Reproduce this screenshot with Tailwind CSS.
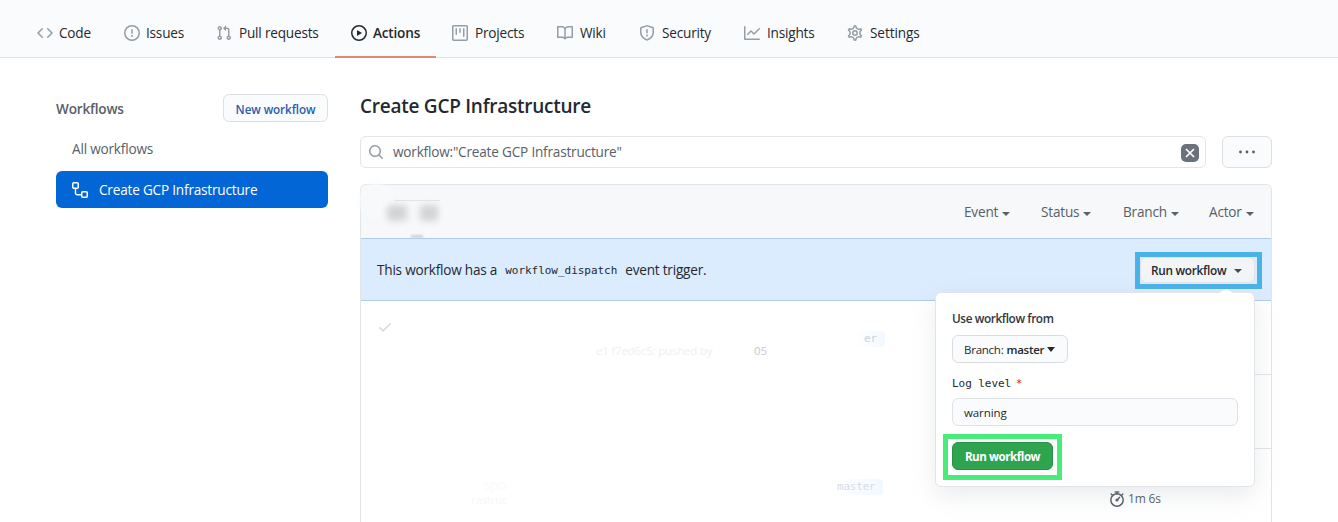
<!DOCTYPE html>
<html lang="en">
<head>
<meta charset="utf-8">
<title>Actions</title>
<script src="https://cdn.jsdelivr.net/npm/@tailwindcss/browser@4"></script>
</head>
<body class="w-[1338px] h-[522px] overflow-hidden bg-white font-['Open_Sans','Noto_Sans',sans-serif] text-[13.6px] tracking-[-0.2px] leading-5 text-[#24292e] whitespace-nowrap">
<nav class="flex h-[58px] bg-[#fafbfc] border-b border-[#dfe2e8] pl-[21px] pt-[9px]">
  <a class="flex w-[87px] items-center gap-[6px] pl-4"><svg class="size-4 fill-[#959da5]" viewBox="0 0 16 16"><path fill-rule="evenodd" d="M4.72 3.22a.75.75 0 011.06 1.06L2.06 8l3.72 3.72a.75.75 0 11-1.06 1.06L.47 8.53a.75.75 0 010-1.06l4.25-4.25zm6.56 0a.75.75 0 10-1.06 1.06L13.94 8l-3.72 3.72a.75.75 0 101.06 1.06l4.25-4.25a.75.75 0 000-1.06l-4.25-4.25z"/></svg><span>Code</span></a>
  <a class="flex w-[92px] items-center gap-[6px] pl-4"><svg class="size-4 fill-[#959da5]" viewBox="0 0 16 16"><path fill-rule="evenodd" d="M8 1.5a6.5 6.5 0 100 13 6.5 6.5 0 000-13zM0 8a8 8 0 1116 0A8 8 0 010 8zm9 3a1 1 0 11-2 0 1 1 0 012 0zm-.25-6.25a.75.75 0 00-1.5 0v3.5a.75.75 0 001.5 0v-3.5z"/></svg><span>Issues</span></a>
  <a class="flex w-[135px] items-center gap-[7px] pl-4"><svg class="size-4 fill-[#959da5]" viewBox="0 0 16 16"><path fill-rule="evenodd" d="M7.177 3.073L9.573.677A.25.25 0 0110 .854v4.792a.25.25 0 01-.427.177L7.177 3.427a.25.25 0 010-.354zM3.75 2.5a.75.75 0 100 1.5.75.75 0 000-1.5zm-2.25.75a2.25 2.25 0 113 2.122v5.256a2.251 2.251 0 11-1.5 0V5.372A2.25 2.25 0 011.5 3.25zM11 2.5h-1V4h1a1 1 0 011 1v5.628a2.251 2.251 0 101.5 0V5A2.5 2.5 0 0011 2.5zm1 10.25a.75.75 0 111.5 0 .75.75 0 01-1.5 0zM3.75 12a.75.75 0 100 1.5.75.75 0 000-1.5z"/></svg><span>Pull requests</span></a>
  <a class="flex w-[101px] items-center gap-[6px] pl-4 border-b-2 border-[#e5857a] -mb-px pt-px font-semibold"><svg class="size-4 fill-[#24292e]" viewBox="0 0 16 16"><path fill-rule="evenodd" d="M1.5 8a6.5 6.5 0 1113 0 6.5 6.5 0 01-13 0zM8 0a8 8 0 100 16A8 8 0 008 0zM6.379 5.227A.25.25 0 006 5.442v5.117a.25.25 0 00.379.214l4.264-2.559a.25.25 0 000-.428L6.379 5.227z"/></svg><span>Actions</span></a>
  <a class="flex w-[105px] items-center gap-[7px] pl-4"><svg class="size-4 fill-[#959da5]" viewBox="0 0 16 16"><path fill-rule="evenodd" d="M1.75 0A1.75 1.75 0 000 1.75v12.5C0 15.216.784 16 1.75 16h12.5A1.75 1.75 0 0016 14.25V1.75A1.75 1.75 0 0014.25 0H1.75zM1.5 1.75a.25.25 0 01.25-.25h12.5a.25.25 0 01.25.25v12.5a.25.25 0 01-.25.25H1.75a.25.25 0 01-.25-.25V1.75zM11.75 3a.75.75 0 00-.75.75v7.5a.75.75 0 001.5 0v-7.5a.75.75 0 00-.75-.75zm-8.25.75a.75.75 0 011.5 0v5.5a.75.75 0 01-1.5 0v-5.5zM8 3a.75.75 0 00-.75.75v3.5a.75.75 0 001.5 0v-3.5A.75.75 0 008 3z"/></svg><span>Projects</span></a>
  <a class="flex w-[82px] items-center gap-[7px] pl-4"><svg class="size-4 fill-[#959da5]" viewBox="0 0 16 16"><path fill-rule="evenodd" d="M0 1.75A.75.75 0 01.75 1h4.253c1.227 0 2.317.59 3 1.501A3.744 3.744 0 0111.006 1h4.245a.75.75 0 01.75.75v10.5a.75.75 0 01-.75.75h-4.507a2.25 2.25 0 00-1.591.659l-.622.621a.75.75 0 01-1.06 0l-.622-.621A2.25 2.25 0 005.258 13H.75a.75.75 0 01-.75-.75V1.75zm8.755 3a2.25 2.25 0 012.25-2.25H14.5v9h-3.757c-.71 0-1.4.201-1.992.572l.004-7.322zm-1.504 7.324l.004-5.073-.002-2.253A2.25 2.25 0 005.003 2.5H1.5v9h3.757a3.75 3.75 0 011.994.574z"/></svg><span>Wiki</span></a>
  <a class="flex w-[105px] items-center gap-[7px] pl-4"><svg class="size-4 fill-[#959da5]" viewBox="0 0 16 16"><path fill-rule="evenodd" d="M7.467.133a1.75 1.75 0 011.066 0l5.25 1.68A1.75 1.75 0 0115 3.48V7c0 1.566-.32 3.182-1.303 4.682-.983 1.498-2.585 2.813-5.032 3.855a1.7 1.7 0 01-1.33 0c-2.447-1.042-4.049-2.357-5.032-3.855C1.32 10.182 1 8.566 1 7V3.48a1.75 1.75 0 011.217-1.667l5.25-1.68zm.61 1.429a.25.25 0 00-.153 0l-5.25 1.68a.25.25 0 00-.174.238V7c0 1.358.275 2.666 1.057 3.86.784 1.194 2.121 2.34 4.366 3.297a.2.2 0 00.154 0c2.245-.956 3.582-2.104 4.366-3.298C13.225 9.666 13.5 8.36 13.5 7V3.48a.25.25 0 00-.174-.237l-5.25-1.68zM9 10.5a1 1 0 11-2 0 1 1 0 012 0zm-.25-5.75a.75.75 0 10-1.5 0v3a.75.75 0 001.5 0v-3z"/></svg><span>Security</span></a>
  <a class="flex w-[103px] items-center gap-[7px] pl-4"><svg class="size-4 fill-[#959da5]" viewBox="0 0 16 16"><path fill-rule="evenodd" d="M1.5 1.75a.75.75 0 00-1.5 0v12.5c0 .414.336.75.75.75h14.5a.75.75 0 000-1.5H1.5V1.75zm14.28 2.53a.75.75 0 00-1.06-1.06L10 7.94 7.53 5.47a.75.75 0 00-1.06 0L3.22 8.72a.75.75 0 001.06 1.06L7 7.06l2.47 2.47a.75.75 0 001.06 0l5.25-5.25z"/></svg><span>Insights</span></a>
  <a class="flex items-center gap-[7px] pl-4"><svg class="size-4 fill-none stroke-[#959da5]" viewBox="0 0 16 16"><g transform="translate(8 8) scale(1.1) translate(-8 -8)"><path stroke-width="1.36" d="M7.429 1.525a6.593 6.593 0 011.142 0c.036.003.108.036.137.146l.289 1.105c.147.56.55.967.997 1.189.174.086.341.183.501.29.417.278.97.423 1.53.27l1.102-.303c.11-.03.175.016.195.046.219.31.41.641.573.989.014.031.022.11-.059.19l-.815.806c-.411.406-.562.957-.53 1.456a4.588 4.588 0 010 .582c-.032.499.119 1.05.53 1.456l.815.806c.08.08.073.159.059.19a6.494 6.494 0 01-.573.99c-.02.029-.086.074-.195.045l-1.103-.303c-.559-.153-1.112-.008-1.529.27-.16.107-.327.204-.5.29-.449.222-.851.628-.998 1.189l-.289 1.105c-.029.11-.101.143-.137.146a6.613 6.613 0 01-1.142 0c-.036-.003-.108-.037-.137-.146l-.289-1.105c-.147-.56-.55-.967-.997-1.189a4.502 4.502 0 01-.501-.29c-.417-.278-.97-.423-1.53-.27l-1.102.303c-.11.03-.175-.016-.195-.046a6.492 6.492 0 01-.573-.989c-.014-.031-.022-.11.059-.19l.815-.806c.411-.406.562-.957.53-1.456a4.587 4.587 0 010-.582c.032-.499-.119-1.05-.53-1.456l-.815-.806c-.08-.08-.073-.159-.059-.19a6.44 6.44 0 01.573-.99c.02-.029.086-.075.195-.045l1.103.303c.559.153 1.112.008 1.529-.27.16-.107.327-.204.5-.29.449-.222.851-.628.998-1.189l.289-1.105c.029-.11.101-.143.137-.146z"/></g><circle cx="8" cy="8" r="2.25" stroke-width="1.5"/></svg><span class="tracking-[-0.1px]">Settings</span></a>
</nav>
<main class="flex pl-14 gap-8">
  <aside class="w-[272px] pt-9">
    <div class="flex h-7 items-center justify-between">
      <h2 class="pt-0.5 font-semibold text-[#586069]">Workflows</h2>
      <a class="flex h-7 w-[105px] items-center justify-center rounded-md border border-[#dcdfe3] bg-[#fafbfc] pt-px text-[11.7px] tracking-[-0.1px] font-semibold text-[#2a5db0]">New workflow</a>
    </div>
    <a class="flex h-[37px] mt-[8px] items-center pl-4 text-[#586069]">All workflows</a>
    <a class="flex h-[37px] mt-[4px] items-center gap-[11px] rounded-md bg-[#0366d6] pl-4 text-white"><svg class="size-4 fill-none stroke-white" viewBox="0 0 16 16" stroke-width="1.5"><rect x=".75" y=".75" width="5.5" height="5.5" rx="1"/><rect x="9.75" y="9.75" width="5.5" height="5.5" rx="1"/><path d="M3.5 6.5V11a1.75 1.75 0 001.75 1.75H9.5"/></svg><span>Create GCP Infrastructure</span></a>
  </aside>
  <section class="w-[912px] pt-9">
    <h1 class="h-6 text-[19px] leading-[25px] tracking-[-0.25px] font-semibold">Create GCP Infrastructure</h1>
    <div class="mt-[18px] flex gap-4">
      <div class="flex h-8 w-[846px] items-center rounded-md border border-[#e1e4e8] pl-[7px] pr-[6px] text-[#586069]">
        <svg class="size-4 fill-[#959da5]" viewBox="0 0 16 16"><path fill-rule="evenodd" d="M11.5 7a4.499 4.499 0 11-8.998 0A4.499 4.499 0 0111.5 7zm-.82 4.74a6 6 0 111.06-1.06l3.04 3.04a.75.75 0 11-1.06 1.06l-3.04-3.04z"/></svg>
        <span class="ml-[9px] grow">workflow:"Create GCP Infrastructure"</span>
        <svg class="mt-px size-[18px]" viewBox="0 0 18 18"><rect width="18" height="18" rx="5" fill="#6a737d"/><path d="M5 5l8 8M13 5l-8 8" stroke="#fff" stroke-width="1.7"/></svg>
      </div>
      <div class="flex h-8 w-[50px] items-center justify-center rounded-md border border-[#dcdfe3] bg-[#fafbfc]"><svg class="h-4 w-4 fill-[#586069]" viewBox="0 0 16 16"><circle cx="1.5" cy="8" r="1.4"/><circle cx="8" cy="8" r="1.4"/><circle cx="14.5" cy="8" r="1.4"/></svg></div>
    </div>
    <div class="relative mt-4 h-[360px] rounded-t-md border border-b-0 border-[#e1e4e8]">
      <header class="relative flex h-[53px] items-center rounded-t-md bg-[#f6f8fa] text-[#586069]">
        <div class="absolute -left-[2px] -top-[2px] h-9 w-[34px] rounded-full bg-[#f8f9fa] blur-[2px]"></div>
        <div class="absolute left-[34px] top-[15px] h-px w-[45px] bg-[#e1e4e8]"></div>
        <div class="absolute left-[26px] top-[20px] h-4 w-5 rounded bg-[#d2d4d6] blur-[3px]"></div>
        <div class="absolute left-[59px] top-[20px] h-4 w-[18px] rounded bg-[#d2d4d6] blur-[3px]"></div>
        <div class="absolute left-[50px] top-[50px] h-[3px] w-3 bg-[#c5d5dc] blur-[1px]"></div>
        <div class="ml-[603px] flex w-[77px] items-center gap-1"><span>Event</span><i class="border-x-4 border-t-4 border-x-transparent border-t-[#586069] mt-1"></i></div>
        <div class="flex w-[82px] items-center gap-1"><span>Status</span><i class="border-x-4 border-t-4 border-x-transparent border-t-[#586069] mt-1"></i></div>
        <div class="flex w-[86px] items-center gap-1"><span>Branch</span><i class="border-x-4 border-t-4 border-x-transparent border-t-[#586069] mt-1"></i></div>
        <div class="flex items-center gap-1"><span>Actor</span><i class="border-x-4 border-t-4 border-x-transparent border-t-[#586069] mt-1"></i></div>
      </header>
      <div class="flex h-[63px] items-center justify-between border-y border-[#b0cbe6] bg-[#dbecff] pl-4 pr-[9px]">
        <p class="flex items-center tracking-[-0.22px]"><span>This workflow has a</span><code class="ml-2 mr-2 pt-0.5 font-['DejaVu_Sans_Mono',monospace] text-[11px] tracking-[-0.03px]">workflow_dispatch</code><span>event trigger.</span></p>
        <div class="mt-px flex h-[37px] w-[127px] border-[5px] border-[#4bb2e8] bg-[#dbecff]"><span class="flex h-[26px] w-[115px] items-center rounded-md border border-[#e1e4e8] bg-[#f3f4f6] pl-[10px] gap-2 text-[11.8px] tracking-[-0.28px] font-semibold">Run workflow<i class="mt-0.5 border-x-4 border-t-4 border-x-transparent border-t-[#444d56]"></i></span></div>
      </div>
      <div class="relative h-[73px]">
        <svg class="absolute left-4 top-[18px] size-4 fill-[#d5d8d7]" viewBox="0 0 16 16"><path d="M13.78 4.22a.75.75 0 010 1.06l-7.25 7.25a.75.75 0 01-1.06 0L2.22 9.28a.75.75 0 011.06-1.06L6 10.94l6.72-6.72a.75.75 0 011.06 0z"/></svg>
        <span class="absolute left-[393px] top-[40px] text-[11.5px] text-[#c8cace]">05</span>
        <span class="absolute left-[235px] top-[40px] text-[11.5px] text-[#f0f0f1]">e1 f7ed6c5: pushed by</span>
        <span class="absolute left-[494px] top-[30px] h-4 w-[30px] rounded bg-linear-to-r from-white to-[#f1f8ff] pl-[9px] leading-4 font-['DejaVu_Sans_Mono',monospace] text-[11px] text-[#c9d2dc]">er</span>
      </div>
      <div class="h-px bg-linear-to-r from-white from-75% via-[#e1e4e8] via-80% to-[#e1e4e8]"></div>
      <div class="h-[73px]"></div>
      <div class="h-px bg-linear-to-r from-white from-65% via-[#e1e4e8] via-75% to-[#e1e4e8]"></div>
      <div class="relative h-[94px]">
        <span class="absolute left-[476px] top-[30px] h-4 w-[46px] rounded bg-linear-to-r from-white to-[#f1f8ff] leading-4 font-['DejaVu_Sans_Mono',monospace] text-[11px] text-[#d5dce4]">master</span>
        <span class="absolute left-[123px] top-[26px] text-[#fafafa]">spo</span>
        <span class="absolute left-[110px] top-[41px] text-[11.5px] text-[#f7f7f8]">rastruc</span>
        <div class="absolute left-[748px] top-[40px] flex items-center gap-[3px] text-[12px] text-[#586069]"><svg class="size-4 fill-none stroke-[#586069]" viewBox="0 0 16 16" stroke-width="1.5" stroke-linecap="round"><circle cx="8" cy="9" r="6.2"/><path d="M6.2.9h3.6M8 1v2M12.6 4.2l1.2-1.2M3.4 4.2L2.2 3M8.2 8.9l2.4-2.6"/><circle cx="8" cy="9" r=".8" fill="#586069"/></svg><span>1m 6s</span></div>
      </div>
      <div class="absolute left-[574px] top-[107px] h-[195px] w-[320px] rounded-md border border-[#e1e4e8] bg-white px-4 pt-4 shadow-[0_8px_24px_rgba(149,157,165,0.2)]">
        <i class="absolute right-[21px] -top-[4px] border-x-[7px] border-b-[4px] border-x-transparent border-b-white"></i>
        <p class="-mt-px text-[11.8px] leading-5 tracking-[-0.4px] font-semibold text-[#30363c]">Use workflow from</p>
        <div class="mt-[7px] flex h-7 w-[116px] items-center rounded-md border border-[#d9dce0] bg-[#fafbfc] pl-[11px] pt-px text-[11.5px] tracking-[-0.25px]"><span>Branch:</span><span class="ml-[3px] font-semibold">master</span><i class="ml-[3px] border-x-4 border-t-[5px] border-x-transparent border-t-[#24292e]"></i></div>
        <p class="mt-[12px] font-['DejaVu_Sans_Mono',monospace] text-[11px] leading-[18px] tracking-[-0.05px]">Log level <span class="-ml-0.5 text-[#cb2431]">*</span></p>
        <div class="mt-[5px] flex h-7 w-[286px] items-center rounded-md border border-[#dfe2e6] bg-[#fafbfc] pl-[11px] pt-px text-[11.5px] tracking-[-0.1px]">warning</div>
        <div class="-ml-[9px] mt-[8px] flex h-[46px] w-[119px] border-[5px] border-[#48ec79] pl-[4px] pt-[3px]"><span class="flex h-7 w-[101px] items-center justify-center rounded-md border border-[#2a8f47] bg-[#2ea44f] pt-px text-[11.6px] tracking-[-0.45px] font-bold text-white">Run workflow</span></div>
      </div>
    </div>
  </section>
</main>
</body>
</html>
